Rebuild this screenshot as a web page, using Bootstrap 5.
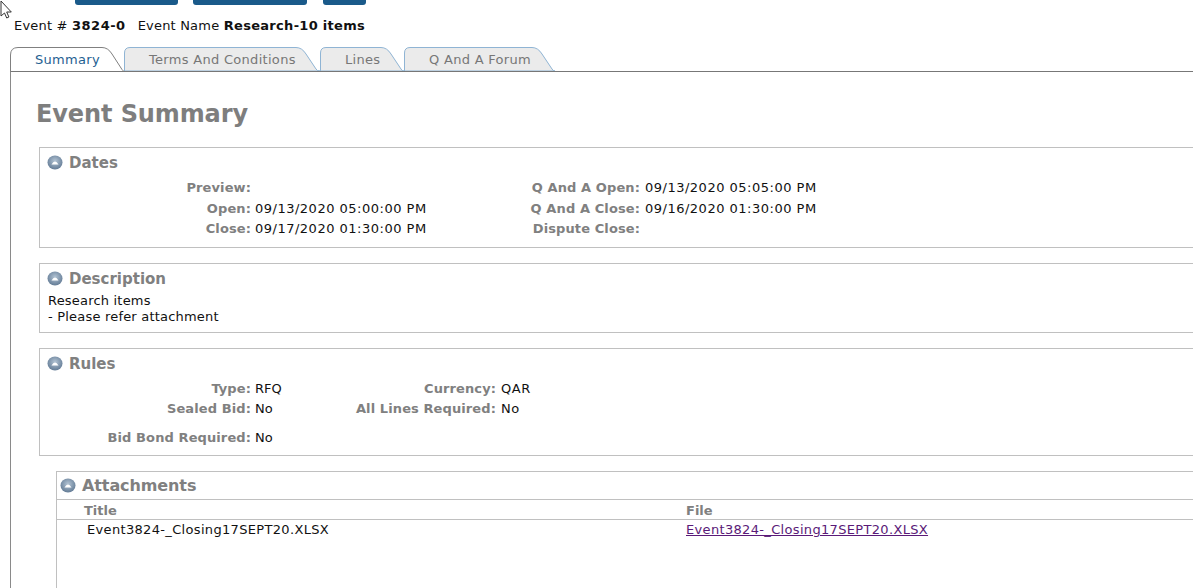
<!DOCTYPE html>
<html lang="en"><head><meta charset="utf-8"><title>Event Summary</title>
<link href="https://cdn.jsdelivr.net/npm/bootstrap@5.3.0/dist/css/bootstrap.min.css" rel="stylesheet">
<style>
html,body{height:588px;overflow:hidden;background:#fff}
body{font-family:"DejaVu Sans",Verdana,sans-serif;font-size:13px;line-height:16px;color:#111;width:1193px}
.top-btns{height:5px;padding-left:75px}
.top-btn{height:5px;background:#1a5a8a;border-radius:0 0 3px 3px}
.tb1{width:103px;margin-right:15px}.tb2{width:114px;margin-right:16px}.tb3{width:43px}
.event-line{padding:13px 0 0 14px;height:42px;letter-spacing:.2px}
.event-line b{letter-spacing:.5px}
.event-line b.ev-name{letter-spacing:.3px}
.gap-name{margin-left:12px}
.tab-row{padding-left:10px;height:25px}
.tab-item{position:relative;height:25px;color:#777;padding:5px 0 0 25px;letter-spacing:.3px}
.tab-item svg{position:absolute;left:0;top:0;z-index:0}
.tab-item span{position:relative;z-index:1}
.tab-on{color:#1f5f92}
.t1{width:114px}.t2{width:196px}.t3{width:84px}.t4{width:152px}
.main-panel{margin-left:10px;border-left:1px solid #8a8a8a;border-top:1px solid #777;height:517px;padding:0 0 0 28px;margin-top:-1px;position:relative}
.page-title{font-size:24px;line-height:30px;font-weight:700;color:#7e7e7e;margin:27px 0 18px -3px;letter-spacing:-.1px}
.box{border:1px solid #c0c0c0;border-right:0;margin-bottom:15px}
.h-dates{height:101px}.h-desc{height:70px}.h-rules{height:108px}
.box-head{font-size:15px;font-weight:700;color:#808080;line-height:18px;padding:6px 0 0 8px;gap:6px}
.box-head svg{margin-top:-1px;margin-left:-1px}
.lab{font-weight:700;color:#808080;text-align:right;flex:none;letter-spacing:.1px}
.w-a{width:211px}.w-m{width:211px}.w-r{width:241px}
.val-d{width:178px;padding-left:4px;flex:none;letter-spacing:.5px;white-space:nowrap}
.val-r{width:0;padding-left:4px;flex:none;white-space:nowrap}
.val-l{padding-left:5px;letter-spacing:.5px;white-space:nowrap}
.rowline{height:20.500px;line-height:20.500px}
.rule-line{height:20px;line-height:20px}
.first-d{margin-top:6px}.first-r{margin-top:6px}
.gap-r{margin-top:9px}
.desc-text{padding:5px 0 0 8px;letter-spacing:.2px}
.attach{margin-left:17px;border:1px solid #c0c0c0;border-right:0;border-bottom:0;height:117px}
.attach .box-head{font-size:16px;padding:4px 0 3px 4px;height:28px;border-bottom:1px solid #c0c0c0;letter-spacing:-.1px}
.att-cols{height:20px;border-bottom:1px solid #c0c0c0;font-weight:700;color:#808080;padding:3px 0 0 27px;line-height:16px}
.att-row{padding:2px 0 0 30px;letter-spacing:.33px}
.col-t{width:602px;flex:none}.att-row .col-t{width:599px}
.file-link{color:#5a1a78}
.cursor{position:absolute;left:0;top:0;z-index:5}
</style></head><body>
<svg class="cursor" width="13" height="20" viewBox="0 0 13 20"><path d="M1 1v15l3.500-3 2.200 5 2.200-1-2.200-5h4.600z" fill="#fff" stroke="#333"/></svg>
<div class="top-btns d-flex"><div class="top-btn tb1"></div><div class="top-btn tb2"></div><div class="top-btn tb3"></div></div>
<div class="event-line">Event # <b>3824-0</b><span class="gap-name">Event Name</span> <b class="ev-name">Research-10 items</b></div>
<div class="tab-row d-flex">
<div class="tab-item tab-on t1"><svg width="114" height="25"><path d="M.5 25V8Q.5 .5 8 .5H92Q98 .5 102 7L112 22.500Q113 24 114 24.500" fill="#fff" stroke="#808080"/></svg><span>Summary</span></div>
<div class="tab-item t2"><svg width="196" height="25"><path d="M.5 24V6Q.5 .5 6 .5H172Q178 .5 182 7L192 22Q193 24 196 24H.5z" fill="#ebebeb" stroke="#8fb4d4"/></svg><span>Terms And Conditions</span></div>
<div class="tab-item t3"><svg width="84" height="25"><path d="M.5 24V6Q.5 .5 6 .5H61Q67 .5 71 7L81 22Q82 24 84 24H.5z" fill="#ebebeb" stroke="#8fb4d4"/></svg><span>Lines</span></div>
<div class="tab-item t4"><svg width="152" height="25"><path d="M.5 24V6Q.5 .5 6 .5H128Q134 .5 138 7L148 22Q149 24 151 24H.5z" fill="#ebebeb" stroke="#8fb4d4"/></svg><span>Q And A Forum</span></div>
</div>
<div class="main-panel">
<h1 class="page-title">Event Summary</h1>
<section class="box h-dates">
<div class="box-head d-flex align-items-center"><svg width="16" height="15" viewBox="0 0 16 15"><use href="#tog"/></svg>Dates</div>
<div class="d-flex rowline first-d"><div class="lab w-a">Preview:</div><div class="val-d"></div><div class="lab w-m">Q And A Open:</div><div class="val-l">09/13/2020 05:05:00 PM</div></div>
<div class="d-flex rowline"><div class="lab w-a">Open:</div><div class="val-d">09/13/2020 05:00:00 PM</div><div class="lab w-m">Q And A Close:</div><div class="val-l">09/16/2020 01:30:00 PM</div></div>
<div class="d-flex rowline"><div class="lab w-a">Close:</div><div class="val-d">09/17/2020 01:30:00 PM</div><div class="lab w-m">Dispute Close:</div></div>
</section>
<section class="box h-desc">
<div class="box-head d-flex align-items-center"><svg width="16" height="15" viewBox="0 0 16 15"><use href="#tog"/></svg>Description</div>
<div class="desc-text">Research items<br>- Please refer attachment</div>
</section>
<section class="box h-rules">
<div class="box-head d-flex align-items-center"><svg width="16" height="15" viewBox="0 0 16 15"><use href="#tog"/></svg>Rules</div>
<div class="d-flex rule-line first-r"><div class="lab w-a">Type:</div><div class="val-r">RFQ</div><div class="lab w-r">Currency:</div><div class="val-l">QAR</div></div>
<div class="d-flex rule-line"><div class="lab w-a">Sealed Bid:</div><div class="val-r">No</div><div class="lab w-r">All Lines Required:</div><div class="val-l">No</div></div>
<div class="d-flex rule-line gap-r"><div class="lab w-a">Bid Bond Required:</div><div class="val-r">No</div></div>
</section>
<section class="attach">
<div class="box-head d-flex align-items-center"><svg width="16" height="15" viewBox="0 0 16 15"><use href="#tog"/></svg>Attachments</div>
<div class="att-cols d-flex"><div class="col-t">Title</div><div>File</div></div>
<div class="att-row d-flex"><div class="col-t">Event3824-_Closing17SEPT20.XLSX</div><a class="file-link" href="#">Event3824-_Closing17SEPT20.XLSX</a></div>
</section>
</div>
<svg width="0" height="0" class="position-absolute"><defs><radialGradient id="tg" cx=".5" cy=".4" r=".65"><stop offset="0" stop-color="#b3c4d4"/><stop offset="1" stop-color="#5c7590"/></radialGradient><g id="tog"><ellipse cx="8" cy="7.500" rx="7.500" ry="7" fill="url(#tg)"/><path d="M4.500 9.500Q8 3.500 11.500 9.500z" fill="#fff"/></g></defs></svg>
</body></html>
